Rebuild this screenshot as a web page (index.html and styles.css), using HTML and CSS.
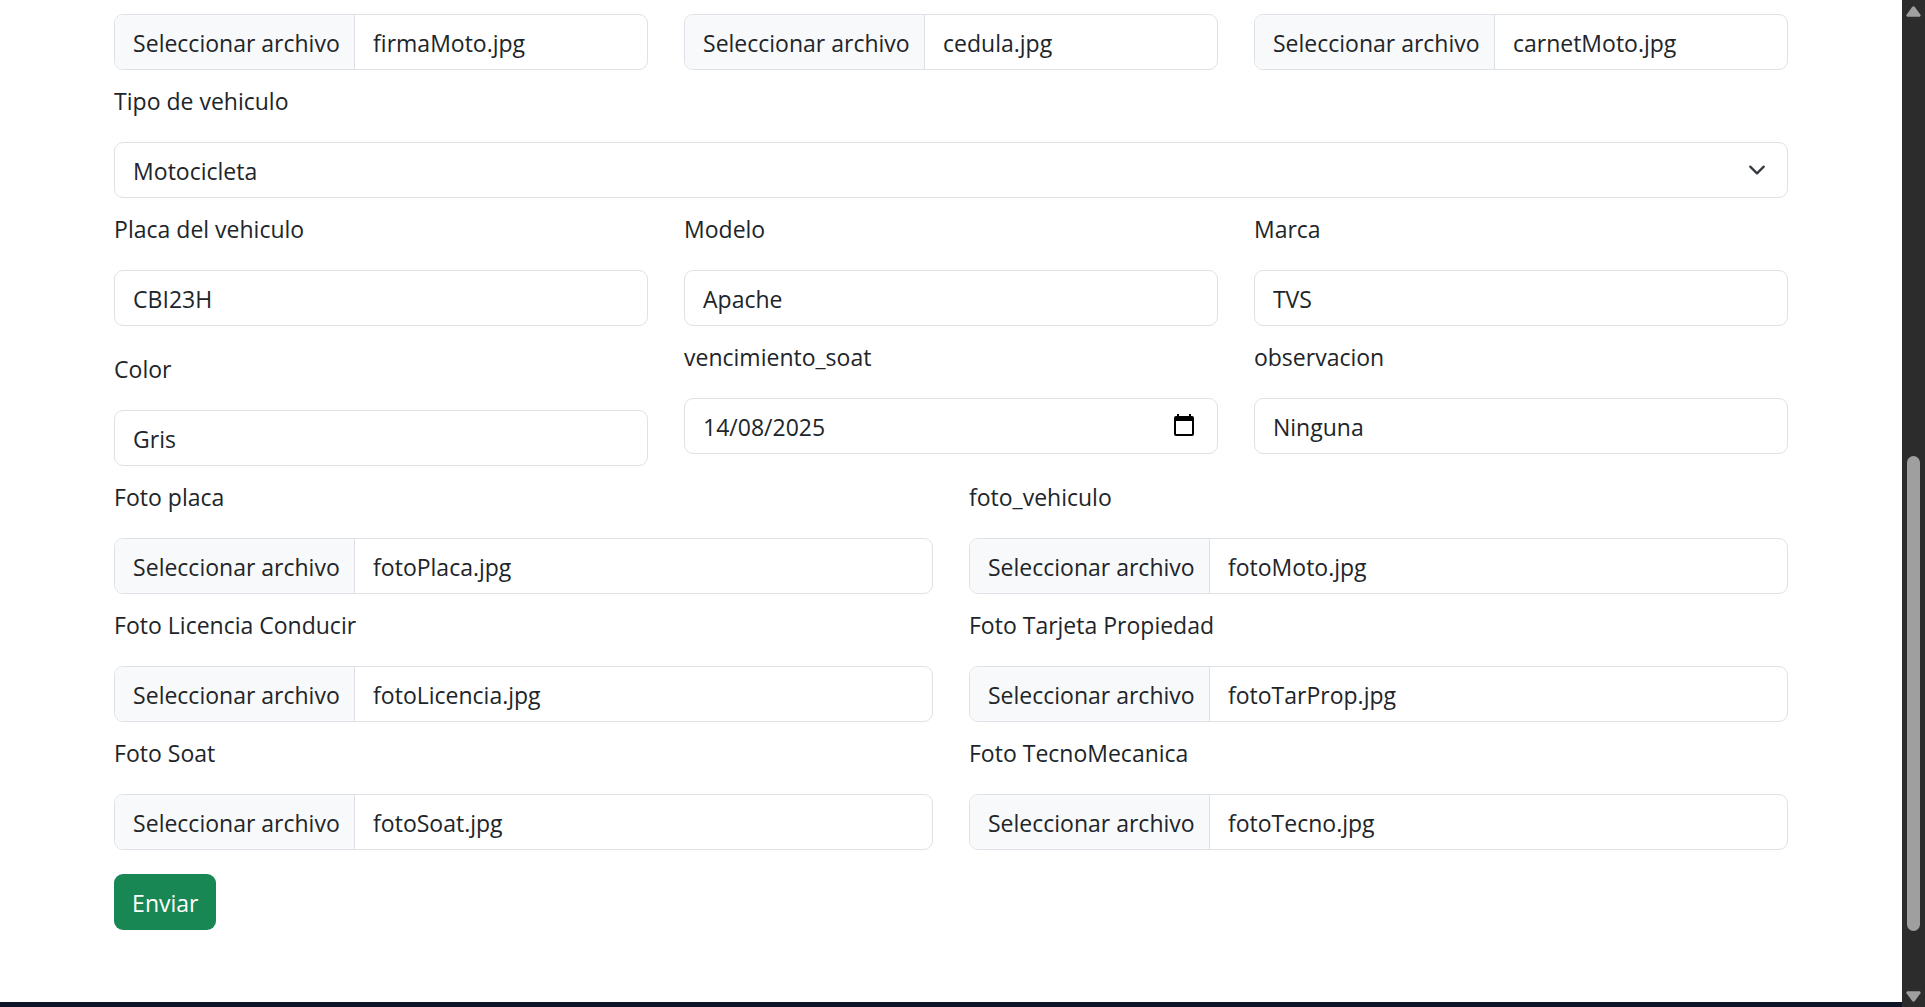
FILE: index.html
```html
<!DOCTYPE html>
<html lang="es">
<head>
<meta charset="utf-8">
<meta name="viewport" content="width=device-width, initial-scale=1">
<title>Registro de vehiculo</title>
<link rel="stylesheet" href="styles.css">
</head>
<body>
<div class="page">
  <main>
    <form class="form">
      <div class="row row-3">
        <div class="file"><input type="file" aria-label="Firma"><span class="file-button">Seleccionar archivo</span><span class="file-name">firmaMoto.jpg</span></div>
        <div class="file"><input type="file" aria-label="Cedula"><span class="file-button">Seleccionar archivo</span><span class="file-name">cedula.jpg</span></div>
        <div class="file"><input type="file" aria-label="Carnet"><span class="file-button">Seleccionar archivo</span><span class="file-name">carnetMoto.jpg</span></div>
      </div>
      <div class="row">
        <div class="field">
          <label for="tipo">Tipo de vehiculo</label>
          <div class="select-wrap">
            <select id="tipo" class="control"><option>Motocicleta</option></select>
            <svg class="chevron" viewBox="0 0 16 16" aria-hidden="true"><path d="m2 5 6 6 6-6" fill="none" stroke="#343a40" stroke-width="2" stroke-linecap="round" stroke-linejoin="round"/></svg>
          </div>
        </div>
      </div>
      <div class="row row-3">
        <div class="field"><label for="placa">Placa del vehiculo</label><input id="placa" class="control" type="text" value="CBI23H"></div>
        <div class="field"><label for="modelo">Modelo</label><input id="modelo" class="control" type="text" value="Apache"></div>
        <div class="field"><label for="marca">Marca</label><input id="marca" class="control" type="text" value="TVS"></div>
      </div>
      <div class="row row-3">
        <div class="field field-spaced"><label for="color">Color</label><input id="color" class="control" type="text" value="Gris"></div>
        <div class="field">
          <label for="soat">vencimiento_soat</label>
          <div class="control date">
            <input id="soat" class="date-input" type="text" value="14/08/2025">
            <button class="date-button" type="button" aria-label="Abrir calendario">
              <svg viewBox="0 0 20 22" aria-hidden="true"><path d="M3 0h2v2h10V0h2v2h1a2 2 0 0 1 2 2v16a2 2 0 0 1-2 2H2a2 2 0 0 1-2-2V4a2 2 0 0 1 2-2h1zM2 7v13h16V7z" fill-rule="evenodd"/></svg>
            </button>
          </div>
        </div>
        <div class="field"><label for="observacion">observacion</label><input id="observacion" class="control" type="text" value="Ninguna"></div>
      </div>
      <div class="row row-2">
        <div class="field"><label for="foto-placa">Foto placa</label><div class="file"><input id="foto-placa" type="file"><span class="file-button">Seleccionar archivo</span><span class="file-name">fotoPlaca.jpg</span></div></div>
        <div class="field"><label for="foto-vehiculo">foto_vehiculo</label><div class="file"><input id="foto-vehiculo" type="file"><span class="file-button">Seleccionar archivo</span><span class="file-name">fotoMoto.jpg</span></div></div>
        <div class="field"><label for="foto-licencia">Foto Licencia Conducir</label><div class="file"><input id="foto-licencia" type="file"><span class="file-button">Seleccionar archivo</span><span class="file-name">fotoLicencia.jpg</span></div></div>
        <div class="field"><label for="foto-tarjeta">Foto Tarjeta Propiedad</label><div class="file"><input id="foto-tarjeta" type="file"><span class="file-button">Seleccionar archivo</span><span class="file-name">fotoTarProp.jpg</span></div></div>
        <div class="field"><label for="foto-soat">Foto Soat</label><div class="file"><input id="foto-soat" type="file"><span class="file-button">Seleccionar archivo</span><span class="file-name">fotoSoat.jpg</span></div></div>
        <div class="field"><label for="foto-tecno">Foto TecnoMecanica</label><div class="file"><input id="foto-tecno" type="file"><span class="file-button">Seleccionar archivo</span><span class="file-name">fotoTecno.jpg</span></div></div>
      </div>
      <button class="submit" type="submit">Enviar</button>
    </form>
    <footer class="footer"></footer>
  </main>
  <div class="scrollbar" aria-hidden="true">
    <svg class="arrow" viewBox="0 0 15 11"><path d="M6 1.200Q7.500-.8 9 1.200L14.500 8.800Q15 10.800 13 10.800H2Q0 10.800.5 8.800Z"/></svg>
    <div class="track"><div class="thumb"></div></div>
    <svg class="arrow" viewBox="0 0 15 11"><path d="M6 9.800Q7.500 11.800 9 9.800L14.500 2.200Q15 .2 13 .2H2Q0 .2.5 2.200Z"/></svg>
  </div>
</div>
</body>
</html>
```
FILE: styles.css
```css
*, *::before, *::after { box-sizing: border-box; }

body {
  margin: 0;
  background: #fff;
  color: #212529;
  font: 23px/36px "Open Sans", "Noto Sans", sans-serif;
}

.page {
  display: grid;
  grid-template-columns: minmax(0, 1fr) 23px;
  height: 100vh;
}

main {
  display: flex;
  flex-direction: column;
  overflow: hidden;
}

.form { padding: 14px 6% 72px; }

.row {
  display: grid;
  column-gap: 36px;
}
.row-2 { grid-template-columns: repeat(2, minmax(0, 1fr)); }
.row-3 { grid-template-columns: repeat(3, minmax(0, 1fr)); }

.field-spaced { margin-top: 12px; }

label {
  display: block;
  margin: 13px 0 23px;
}

.control, .file {
  display: block;
  width: 100%;
  height: 56px;
  border: 1px solid #dee2e6;
  border-radius: 9px;
  background: #fff;
  color: inherit;
  font: inherit;
}
.control { padding: 2px 18px 0; }

.select-wrap { position: relative; }
select.control { appearance: none; }
.chevron {
  position: absolute;
  top: 19px;
  right: 22px;
  width: 18px;
  height: 18px;
  pointer-events: none;
}

.date {
  display: flex;
  padding-right: 23px;
}
.date-input {
  flex: 1;
  min-width: 0;
  padding: 0;
  border: 0;
  background: none;
  color: inherit;
  font: inherit;
}
.date-button {
  align-self: flex-start;
  margin-top: 13px;
  padding: 0;
  border: 0;
  background: none;
}
.date-button svg {
  display: block;
  width: 20px;
  height: 22px;
}

.file {
  position: relative;
  display: flex;
  overflow: hidden;
  line-height: 56px;
}
.file input {
  position: absolute;
  inset: 0;
  width: 100%;
  opacity: 0;
}
.file-button {
  flex: none;
  width: 240px;
  padding-left: 18px;
  border-right: 1px solid #dee2e6;
  background: #f8f9fa;
}
.file-name { padding-left: 18px; }

.submit {
  display: block;
  height: 56px;
  margin-top: 24px;
  padding: 2px 18px 0;
  border: 0;
  border-radius: 9px;
  background: #198754;
  color: #fff;
  font: inherit;
}

.footer {
  flex: 1 0 5px;
  background: #0d1526;
}

.scrollbar {
  display: flex;
  flex-direction: column;
  align-items: center;
  padding: 6px 0 5px;
  background: #2c2c2c;
}
.arrow {
  width: 15px;
  height: 11px;
  fill: #9f9f9f;
}
.track {
  display: grid;
  flex: 1;
  grid-template-rows: 439fr 475fr 60fr;
}
.thumb {
  grid-row: 2;
  width: 13px;
  border-radius: 7px;
  background: #9f9f9f;
}
```
